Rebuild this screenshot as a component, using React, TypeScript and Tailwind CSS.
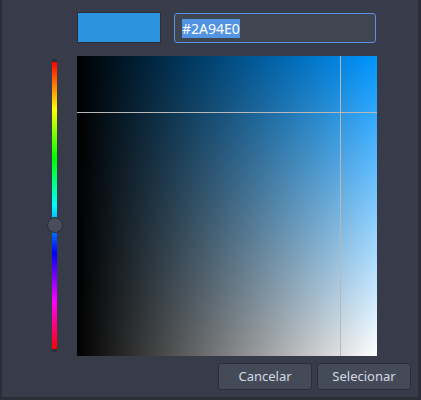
export default function App() {
  const hue = "#0095ff"

  return (
    <div
      className="w-[421px] h-[400px] bg-[#383c4a] border-l-2 border-r-[3px] border-b-[3px] border-[#2b2e39] flex flex-col"
      style={{ fontFamily: '"Noto Sans", "Open Sans", sans-serif' }}
    >
      {/* swatch + hex entry */}
      <div className="flex items-center pl-[75px] pt-[12px] gap-[13px]">
        <div className="w-[84px] h-[31px] bg-[#2a94e0] border border-[#2b2e39]" />
        <div className="w-[202px] h-[30px] mt-[1px] rounded-[3px] border border-[#5294e2] bg-[#404552] flex items-center pl-[7px]">
          <span className="bg-[#5294e2] text-white text-[14px] leading-[19px]">#2A94E0</span>
        </div>
      </div>

      {/* hue slider + sv square */}
      <div className="flex pl-[45px] mt-[13px]">
        <div className="relative w-[16px] h-[300px]">
          <div className="absolute left-[5px] top-[3px] w-[5px] h-[293px] rounded-full bg-[#2b2e39] py-[3px]">
            <div className="w-full h-full bg-[linear-gradient(to_bottom,#ff0000,#ffff00,#00ff00,#00ffff,#0000ff,#ff00ff,#ff0000)]" />
          </div>
          <div className="absolute left-0 top-[161px] w-[16px] h-[16px] rounded-full bg-[#484d5c] border border-[#2b2e39]" />
        </div>
        <div
          className="relative ml-[14px] w-[300px] h-[300px]"
          style={{ background: `linear-gradient(to right, #000, transparent), linear-gradient(to bottom, ${hue}, #fff)` }}
        >
          <div className="absolute top-0 bottom-0 left-[263px] w-px bg-[#b8b8b8]" />
          <div className="absolute left-0 right-0 top-[56px] h-px bg-[#b8b8b8]" />
        </div>
      </div>

      {/* buttons */}
      <div className="flex justify-end gap-[5px] pr-[7px] mt-[7px]">
        <button className="w-[94px] h-[27px] rounded-[3px] bg-[#444a58] border border-[#2b2e39] text-[#d3dae3] text-[13px]">
          Cancelar
        </button>
        <button className="w-[94px] h-[27px] rounded-[3px] bg-[#444a58] border border-[#2b2e39] text-[#d3dae3] text-[13px]">
          Selecionar
        </button>
      </div>
    </div>
  )
}
